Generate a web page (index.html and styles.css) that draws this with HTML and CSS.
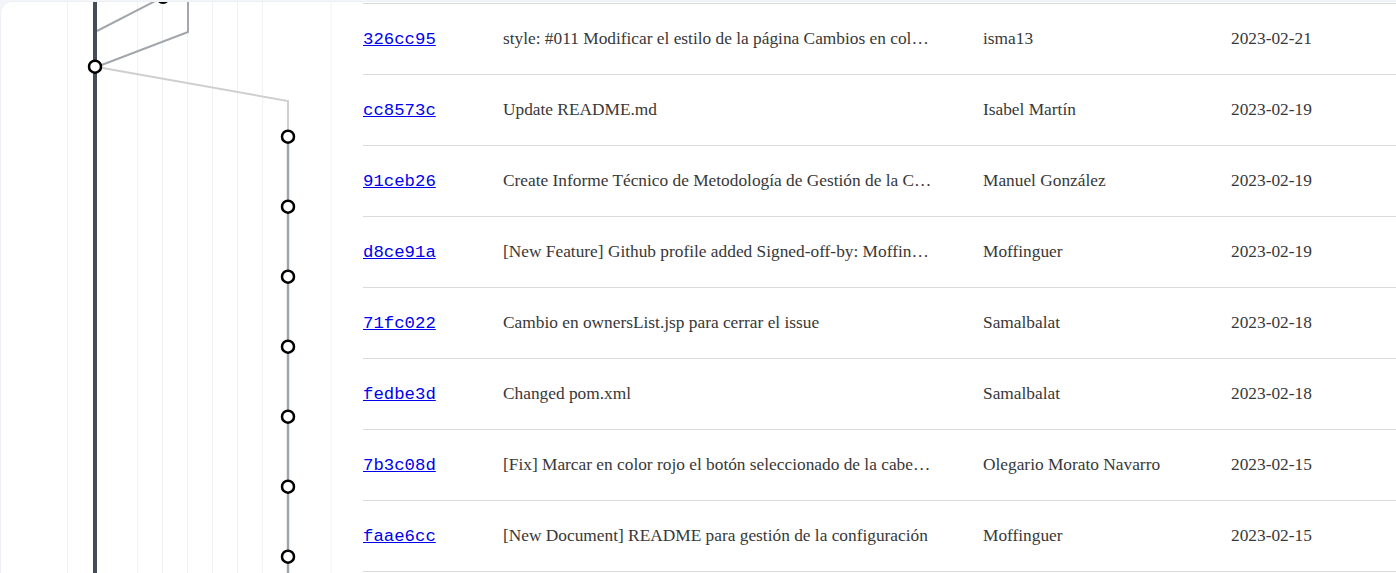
FILE: index.html
```html
<!DOCTYPE html>
<html lang="es">
<head>
<meta charset="utf-8">
<title>Commits</title>
<link rel="stylesheet" href="styles.css">
</head>
<body>
<div class="card">
  <div class="graph">
    <svg class="graph-svg" width="362" height="571" viewBox="1 2 362 571" xmlns="http://www.w3.org/2000/svg">
      <g class="guides">
        <line x1="67.5" y1="0" x2="67.5" y2="573"/>
        <line x1="137.5" y1="0" x2="137.5" y2="573"/>
        <line x1="162.5" y1="0" x2="162.5" y2="573"/>
        <line x1="187.5" y1="0" x2="187.5" y2="573"/>
        <line x1="212.5" y1="0" x2="212.5" y2="573"/>
        <line x1="237.5" y1="0" x2="237.5" y2="573"/>
        <line x1="262.5" y1="0" x2="262.5" y2="573"/>
        <line x1="331" y1="0" x2="331" y2="573"/>
      </g>
      <polyline class="edge mid" points="97,31 163,-3"/>
      <polyline class="edge mid" points="188,0 188,32 97,66.7"/>
      <polyline class="edge light" points="97,67 288,101 288,136.7"/>
      <line class="edge branch" x1="288" y1="136.7" x2="288" y2="580"/>
      <line class="main" x1="95" y1="0" x2="95" y2="580"/>
      <g class="nodes">
        <circle cx="163" cy="-3.3" r="6"/>
        <circle cx="95" cy="66.7" r="6"/>
        <circle cx="288" cy="136.7" r="6"/>
        <circle cx="288" cy="206.7" r="6"/>
        <circle cx="288" cy="276.7" r="6"/>
        <circle cx="288" cy="346.7" r="6"/>
        <circle cx="288" cy="416.7" r="6"/>
        <circle cx="288" cy="486.7" r="6"/>
        <circle cx="288" cy="556.7" r="6"/>
      </g>
    </svg>
  </div>
  <div class="commits">
    <div class="row"><a class="hash" href="#">326cc95</a><span class="msg">style: #011 Modificar el estilo de la página Cambios en color para que se vea mejor</span><span class="author">isma13</span><span class="date">2023-02-21</span></div>
    <div class="row"><a class="hash" href="#">cc8573c</a><span class="msg">Update README.md</span><span class="author">Isabel Martín</span><span class="date">2023-02-19</span></div>
    <div class="row"><a class="hash" href="#">91ceb26</a><span class="msg">Create Informe Técnico de Metodología de Gestión de la Configuración</span><span class="author">Manuel González</span><span class="date">2023-02-19</span></div>
    <div class="row"><a class="hash" href="#">d8ce91a</a><span class="msg">[New Feature] Github profile added Signed-off-by: Moffinguer</span><span class="author">Moffinguer</span><span class="date">2023-02-19</span></div>
    <div class="row"><a class="hash" href="#">71fc022</a><span class="msg">Cambio en ownersList.jsp para cerrar el issue</span><span class="author">Samalbalat</span><span class="date">2023-02-18</span></div>
    <div class="row"><a class="hash" href="#">fedbe3d</a><span class="msg">Changed pom.xml</span><span class="author">Samalbalat</span><span class="date">2023-02-18</span></div>
    <div class="row"><a class="hash" href="#">7b3c08d</a><span class="msg">[Fix] Marcar en color rojo el botón seleccionado de la cabecera</span><span class="author">Olegario Morato Navarro</span><span class="date">2023-02-15</span></div>
    <div class="row last"><a class="hash" href="#">faae6cc</a><span class="msg">[New Document] README para gestión de la configuración</span><span class="author">Moffinguer</span><span class="date">2023-02-15</span></div>
  </div>
</div>
</body>
</html>
```

FILE: styles.css
```css
html, body {
  margin: 0;
  padding: 0;
  height: 100%;
  overflow: hidden;
}
body {
  background: #f3f5f8;
  font-family: "Liberation Serif", "Times New Roman", serif;
  font-size: 17.33px;
  color: #383838;
}
.card {
  box-sizing: border-box;
  margin-top: 1px;
  height: calc(100% - 1px);
  overflow: hidden;
  background: #ffffff;
  border: 1px solid #edf0f4;
  border-right: none;
  border-bottom: none;
  border-radius: 12px 0 0 0;
  display: flex;
}
.graph {
  width: 362px;
  flex: none;
}
.graph-svg {
  display: block;
  overflow: hidden;
}
.guides line {
  stroke: #f0f2f6;
  stroke-width: 1;
}
.edge {
  fill: none;
  stroke-width: 2;
  stroke-linejoin: miter;
}
.edge.mid { stroke: #a3a7ad; }
.edge.light { stroke: #cfcfcf; }
.edge.branch { stroke: #a0a5ab; stroke-width: 2.5; }
.main {
  stroke: #444c58;
  stroke-width: 4;
}
.nodes circle {
  fill: #ffffff;
  stroke: #000000;
  stroke-width: 2.5;
}
.commits {
  flex: 1;
  margin-top: 1px;
  min-width: 0;
}
.row {
  display: grid;
  grid-template-columns: 140px 480px 248px 1fr;
  align-items: center;
  height: 70px;
  border-top: 1px solid #dadada;
  white-space: nowrap;
}
.row.last {
  border-bottom: 1px solid #dadada;
}
.hash {
  font-family: "Liberation Mono", "Courier New", monospace;
  font-size: 17.33px;
  color: #0000ee;
  text-decoration: underline;
}
.msg {
  display: block;
  width: 432px;
  overflow: hidden;
  text-overflow: ellipsis;
}
```
